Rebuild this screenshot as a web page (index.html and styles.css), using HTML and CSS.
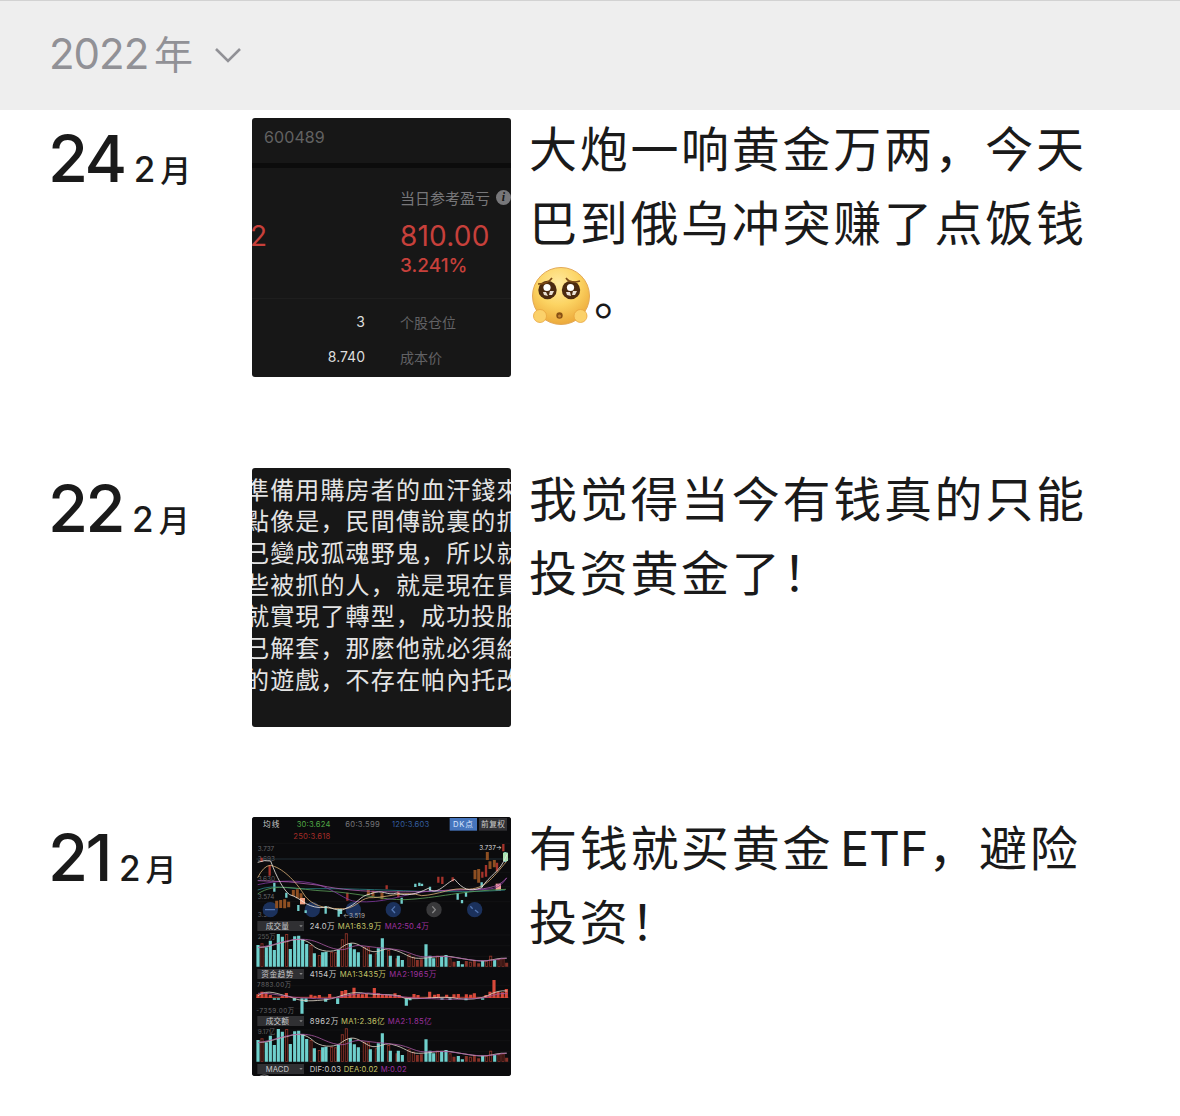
FILE: index.html
```
<!DOCTYPE html>
<html lang="zh-CN">
<head>
  <meta charset="UTF-8" />
  <meta name="viewport" content="width=device-width, initial-scale=1.0"/>
  <title>朋友圈</title>
  <link rel="stylesheet" href="styles.css">
</head>
<body>
  <div class="year-bar">
    <span class="year"><span class="num">2022</span>年</span>
    <svg class="chevron" viewBox="0 0 28 18"><path d="M2 3L14 15L26 3"/></svg>
  </div>

  <div class="post">
    <div class="date"><span class="day">24</span><span class="month">2</span><span class="yue">月</span></div>
    <div class="thumb stock">
      <div class="stock-code">600489</div>
      <div class="stock-main">
        <span class="cut">2</span>
        <div class="profit">
          <div class="label">当日参考盈亏 <span class="info">i</span></div>
          <div class="amount">810.00</div>
          <div class="percent">3.241%</div>
        </div>
      </div>
      <div class="stock-rows">
        <span class="val">3</span><span class="key">个股仓位</span>
        <span class="val">8.740</span><span class="key">成本价</span>
      </div>
    </div>
    <div class="text">大炮一响黄金万两，今天<br>巴到俄乌冲突赚了点饭钱<br><svg class="emoji" viewBox="0 0 60 60">
        <defs>
          <radialGradient id="face" cx="45%" cy="28%" r="75%">
            <stop offset="0" stop-color="#ffeaa0"/>
            <stop offset="0.5" stop-color="#fcd463"/>
            <stop offset="1" stop-color="#eba637"/>
          </radialGradient>
        </defs>
        <circle cx="30" cy="30" r="28.5" fill="url(#face)" stroke="#e3a958" stroke-width="1"/>
        <circle cx="16.500" cy="24" r="9.200" fill="#4b2a10"/>
        <circle cx="40" cy="24" r="9.200" fill="#4b2a10"/>
        <path d="M7 18Q17 18 21 12M35 12Q39 18 49 15" fill="none" stroke="#7c4a17" stroke-width="1.600"/>
        <circle cx="16" cy="21.500" r="3.600" fill="#fff"/>
        <circle cx="39.500" cy="21.500" r="3.600" fill="#fff"/>
        <path d="M12 26l3 0 2 4-4-1zM19 25h4l-2 4h-3zM35 26h4l1 4-4-1zM42 25h4l-2 4h-3z" fill="#e9dfd4"/>
        <circle cx="28.500" cy="49.500" r="3.200" fill="#875014"/>
        <circle cx="28.500" cy="50" r="1.500" fill="#c58431"/>
        <circle cx="9" cy="50" r="6.500" fill="#fbd16a" stroke="#e9a43e" stroke-width="0.800"/>
        <circle cx="49.500" cy="50" r="6.500" fill="#fbd16a" stroke="#e9a43e" stroke-width="0.800"/>
      </svg>。</div>
  </div>

  <div class="post">
    <div class="date"><span class="day">22</span><span class="month">2</span><span class="yue">月</span></div>
    <div class="thumb note">
      <p>準備用購房者的血汗錢來</p>
      <p>點像是，民間傳說裏的抓</p>
      <p>己變成孤魂野鬼，所以就</p>
      <p>些被抓的人，就是現在買</p>
      <p>就實現了轉型，成功投胎</p>
      <p>己解套，那麼他就必須給</p>
      <p>的遊戲，不存在帕內托改</p>
    </div>
    <div class="text">我觉得当今有钱真的只能<br>投资黄金了！</div>
  </div>

  <div class="post">
    <div class="date"><span class="day">21</span><span class="month">2</span><span class="yue">月</span></div>
    <div class="thumb">
      <svg class="chart" viewBox="0 0 777 777">
        <defs>
          <g id="volume">
            <path class="grid" d="M34 60H795M34 92H795M34 124H795M34 156H795"/>
            <path class="red-bar" d="M51 155V85M125 155V57M198 155V90M223 155V120M260 155V110M272 155V112M292 155V73M304 155V55M358 155V95M370 155V97M394 155V115M431 155V105M456 155V130M492 155V118M505 155V125M517 155V135M529 155V133M578 155V122M615 155V130M627 155V140M664 155V138M676 155V140M688 155V135M701 155V145M725 155V137M737 155V122M762 155V133M774 155V130M785 155V143"/>
            <path class="hollow" d="M51 153V88M125 153V60M198 153V93M223 153V123M260 153V113M272 153V115M292 153V76M304 153V58M358 153V98M370 153V100M394 153V118M431 153V108M492 153V121M505 153V128M578 153V125M615 153V133M676 153V143M725 153V140M737 153V125M762 153V136M774 153V133"/>
            <path class="cyan-bar" d="M39 155V90M64 155V97M76 155V77M88 155V105M100 155V57M112 155V65M136 155V102M149 155V64M161 155V62M173 155V72M185 155V87M208 155V115M233 155V112M243 155V110M280 155V103M316 155V85M328 155V103M340 155V112M376 155V118M400 155V100M412 155V70M436 155V122M460 155V122M472 155V135M543 155V88M555 155V122M566 155V130M590 155V125M603 155V120M640 155V138M652 155V148M713 155V137M749 155V135"/>
            <path class="line ma-w" d="M39 97C75 98 90 85 125 80C170 65 190 78 210 97C240 115 275 110 290 97C320 75 335 85 360 100C395 125 415 95 440 103C480 112 490 130 520 130C560 130 590 118 630 127C670 134 700 140 725 137C750 134 762 128 785 130"/>
            <path class="line ma-p" d="M39 98C90 90 100 82 145 74C220 66 230 98 285 104C310 106 320 88 350 92C395 98 425 100 450 103C500 109 510 130 555 125C610 120 660 134 700 137C735 139 760 132 785 129"/>
          </g>
        </defs>

        <!-- price -->
        <g transform="translate(-21 -21)">
          <path class="grid" d="M34 100H795M34 147H795M34 187H795M34 230H795M34 275H795"/>
          <rect x="614" y="24" width="82" height="38" fill="#4675bd"/>
          <rect x="702" y="24" width="84" height="38" fill="#303033"/>
          <text class="t" x="54" y="52" textLength="49" fill="#ccc">均线</text>
          <text class="t" x="155" y="52" textLength="101" fill="#51a746">30:3.624</text>
          <text class="t" x="301" y="52" textLength="103" fill="#77777a">60:3.599</text>
          <text class="t" x="441" y="52" textLength="112" fill="#345d9f">120:3.603</text>
          <text class="t" x="145" y="88" textLength="111" fill="#a52c28">250:3.618</text>
          <text class="t" x="624" y="52" textLength="60" fill="#d9e7ff">DK点</text>
          <text class="t" x="708" y="52" textLength="72" fill="#ccc">前复权</text>
          <g class="s" fill="#66666a">
            <text x="38" y="123">3.737</text>
            <text x="38" y="154">3.693</text>
            <text x="38" y="212">3.630</text>
            <text x="38" y="268">3.574</text>
            <text x="38" y="320">3.519</text>
          </g>
          <path d="M34 147H795" stroke="#243b46" stroke-width="2"/>
          <g fill="#1b315c">
            <circle cx="76" cy="299" r="23"/><circle cx="202" cy="299" r="23"/><circle cx="325" cy="299" r="23"/>
            <circle cx="445" cy="299" r="23"/><circle cx="689" cy="299" r="23"/>
            <circle cx="567" cy="299" r="23" fill="#39393b"/>
          </g>
          <text class="s" x="294" y="323" fill="#aaa">←3.519</text>
          <text class="s" x="703" y="120" fill="#ddd">3.737→</text>
          <path d="M450 289l-9 10 9 10M60 299h30M676 289l7 7M690 300l10 8" fill="none" stroke="#5275b2" stroke-width="4"/>
          <path d="M562 289l9 10-9 10" fill="none" stroke="#888" stroke-width="4"/>
          <path class="candle-o" d="M95 272V295M107 270V294M119 268V295M131 275V292M145 240V258M157 238V265M168 250V268M370 238V256M384 242V260M411 248V268M690 180V208M701 177V218M727 126V150M735 154V177M748 150V172"/>
          <path class="candle-r" d="M74 165V197M74 178V186M307 248V272M425 226V238M460 244V262M580 200V218M592 200V222M623 202V214M712 185V203M723 165V200M756 158V184M775 102V124M50 143V156"/>
          <path class="candle-c" d="M88 218V245M124 248V263M160 285V303M182 301V309M242 288V311M281 297V320M288 297V312M470 263V281M511 221V231M523 218V228M531 221V228M555 230V243M638 249V269M651 270V280M663 246V260M710 217V232M781 126V156"/>
          <rect x="165" y="264" width="15" height="19" fill="#f1a184"/>
          <rect x="752" y="221" width="16" height="21" fill="#f3a09a"/>
          <rect x="774" y="128" width="15" height="25" fill="#a9e1b0"/>
          <path class="line" stroke="#287f83" d="M38 240C90 220 130 240 210 236C330 235 450 242 560 245C650 245 720 245 780 240"/>
          <path class="line" stroke="#5a9a57" d="M38 252C90 215 160 240 240 243C350 250 410 270 480 269C580 264 650 242 783 238"/>
          <path class="line" stroke="#7d379b" d="M38 224C100 210 170 210 215 223C270 238 300 272 335 275C420 280 460 256 540 245C640 236 720 244 752 233Q770 228 785 203"/>
          <path class="line" stroke="#a85baa" d="M38 212Q130 212 225 226C340 252 520 247 620 240C690 236 750 245 785 204"/>
          <path class="line" stroke="#d5ab74" d="M38 203Q56 167 76 166C110 172 150 210 180 258C210 296 260 296 299 296C340 292 347 259 385 263C440 260 480 242 530 257C580 255 625 230 663 238C720 237 738 209 785 154"/>
          <path class="line" stroke="#e9e5df" d="M38 157Q60 149 77 153C94 201 117 242 134 254C171 265 178 289 225 293L250 291Q286 306 299 297C338 282 343 258 375 252C416 235 423 259 456 249C486 259 511 254 550 235C576 260 600 219 629 208C654 238 672 247 710 233C735 193 764 190 786 133"/>
        </g>

        <!-- volume -->
        <g transform="translate(-21 294)">
          <text class="s" x="38" y="71" fill="#666">255万</text>
          <use href="#volume"/>
          <rect class="tab" x="37" y="18" width="140" height="30"/>
          <text class="t" x="62" y="42" textLength="70" fill="#c9c9cb">成交量</text>
          <path class="arrow" d="M163 31h10l-5 6z"/>
          <text class="t" x="194" y="42" textLength="75" fill="#ccc">24.0万</text>
          <text class="t" x="278" y="42" textLength="131" fill="#c4c369">MA1:63.9万</text>
          <text class="t" x="419" y="42" textLength="133" fill="#9e319f">MA2:50.4万</text>
        </g>

        <!-- money flow -->
        <g transform="translate(-21 294)">
          <path class="grid" d="M34 212H795M34 248H795M34 280H795"/>
          <rect class="tab" x="37" y="162" width="140" height="30"/>
          <text class="t" x="49" y="186" textLength="96" fill="#c9c9cb">资金趋势</text>
          <path class="arrow" d="M163 174h10l-5 6z"/>
          <text class="t" x="194" y="186" textLength="80" fill="#ccc">4154万</text>
          <text class="t" x="284" y="186" textLength="139" fill="#c4c369">MA1:3435万</text>
          <text class="t" x="433" y="186" textLength="141" fill="#9e319f">MA2:1965万</text>
          <text class="s" x="36" y="215" textLength="102" fill="#67676a">7883.00万</text>
          <text class="s" x="34" y="293" textLength="113" fill="#67676a">-7359.00万</text>
          <path d="M34 247H790" stroke="#8e3029" stroke-width="4"/>
          <path class="flow" d="M39 249V238M51 249V230M63 249V233M76 249V240M112 249V242M124 249V234M198 249V239M210 249V242M223 249V240M254 249V237M291 249V228M302 249V225M315 249V237M327 249V218M340 249V237M352 249V238M364 249V237M388 249V219M400 249V235M412 249V238M424 249V239M436 249V240M450 249V235M463 249V240M507 249V237M519 249V240M554 249V230M569 249V239M580 249V237M605 249V239M627 249V238M640 249V237M664 249V238M677 249V239M688 249V235M723 249V240M735 249V230M747 249V195M759 249V230M772 249V232M784 249V222"/>
          <path class="cyan-bar" d="M88 250V254M100 250V254M148 250V257M171 250V296M183 250V261M242 250V260M278 250V267M484 250V272M495 250V256M591 250V254M615 250V255M663 250V256M713 250V254"/>
          <path class="line ma-w" d="M39 242C70 220 95 238 135 245C170 263 210 257 245 254C285 248 315 224 365 236C415 242 445 233 480 250C530 255 590 240 640 251Q690 257 728 242Q760 224 787 228"/>
          <path class="line ma-p" d="M39 235C80 232 135 250 185 249C270 259 310 235 370 234C440 240 490 251 560 251C640 255 690 251 725 247Q761 233 787 236"/>
        </g>

        <!-- turnover, same shape as volume -->
        <g transform="translate(-21 579)">
          <text class="s" x="38" y="71" fill="#666">9.17亿</text>
          <use href="#volume"/>
          <rect class="tab" x="37" y="18" width="140" height="30"/>
          <text class="t" x="62" y="42" textLength="70" fill="#c9c9cb">成交额</text>
          <path class="arrow" d="M163 31h10l-5 6z"/>
          <text class="t" x="194" y="42" textLength="86" fill="#ccc">8962万</text>
          <text class="t" x="288" y="42" textLength="131" fill="#c4c369">MA1:2.36亿</text>
          <text class="t" x="428" y="42" textLength="132" fill="#9e319f">MA2:1.85亿</text>
          <rect class="tab" x="37" y="162" width="140" height="30"/>
          <text class="t" x="62" y="186" textLength="70" fill="#c9c9cb">MACD</text>
          <path class="arrow" d="M163 174h10l-5 6z"/>
          <text class="t" x="194" y="186" textLength="94" fill="#ccc">DIF:0.03</text>
          <text class="t" x="296" y="186" textLength="103" fill="#c4c369">DEA:0.02</text>
          <text class="t" x="407" y="186" textLength="78" fill="#9e319f">M:0.02</text>
          <path d="M42 200Q58 190 74 200" fill="none" stroke="#ccc" stroke-width="2"/>
        </g>
      </svg>
    </div>
    <div class="text">有钱就买黄金<span class="latin">ETF</span>，避险<br>投资！</div>
  </div>
</body>
</html>
```
FILE: styles.css
```
* {
  box-sizing: border-box;
}
body {
  margin: 0;
  background: #fff;
  color: #1a1a1a;
  font-family: Inter, "Noto Sans CJK SC", sans-serif;
}
.year-bar {
  display: flex;
  align-items: center;
  height: 110px;
  padding: 0 0 2px 49px;
  border-top: 1px solid #d2d2d2;
  background: #eee;
  color: #919196;
}
.year {
  display: flex;
  align-items: baseline;
  font-size: 39px;
  line-height: 50px;
}
.year .num {
  width: 105px;
  font-size: 42px;
  letter-spacing: -1px;
}
.chevron {
  width: 28px;
  height: 18px;
  margin-left: 21px;
}
.chevron path {
  fill: none;
  stroke: #919196;
  stroke-width: 2.6;
}
.post {
  display: grid;
  grid-template-columns: 204px 259px 1fr;
  height: 349.5px;
  padding: 8px 0 0 48px;
}
.date {
  display: flex;
  align-items: baseline;
  height: 80px;
  margin-top: 1px;
  line-height: 80px;
}
.day {
  font-size: 65px;
  font-weight: 500;
  letter-spacing: -2.5px;
}
.month {
  margin-left: 9px;
  font-size: 35px;
  font-weight: 500;
}
.yue {
  margin-left: 5px;
  font-size: 31px;
  font-weight: 500;
}
.thumb {
  width: 259px;
  height: 259px;
  border-radius: 3px;
  background: #171717;
  overflow: hidden;
}
.text {
  margin-top: -9px;
  padding-left: 18px;
  font-family: "Noto Sans CJK SC", sans-serif;
  font-size: 48px;
  line-height: 74px;
  letter-spacing: 2.7px;
  white-space: nowrap;
}
.latin {
  margin: 0 0 0 7px;
  font-family: Inter, sans-serif;
  line-height: 0;
  letter-spacing: 0;
}
.emoji {
  width: 60px;
  height: 60px;
  margin: 0 3px 0 2px;
  vertical-align: -11px;
}

/* stock screenshot */
.stock-code {
  height: 50px;
  padding: 9px 0 0 12px;
  border-bottom: 5px solid #0c0c0c;
  color: #626262;
  font-size: 16px;
  line-height: 20px;
  letter-spacing: 0.1px;
}
.stock-main {
  display: flex;
  height: 131px;
  border-bottom: 1px solid #1e1e1e;
}
.cut {
  width: 148px;
  margin-left: -2px;
  padding-top: 51px;
  color: #c7403b;
  font-size: 28px;
  line-height: 34px;
}
.profit {
  padding: 19px 0 0 2px;
  color: #c7403b;
  white-space: nowrap;
}
.label {
  display: flex;
  align-items: center;
  gap: 6px;
  height: 20px;
  color: #77777a;
  font-size: 15px;
}
.info {
  width: 15px;
  height: 15px;
  border-radius: 50%;
  background: #77777a;
  color: #171717;
  font: italic bold 12px/15px "Liberation Serif", serif;
  text-align: center;
}
.amount {
  margin-top: 12px;
  font-size: 28px;
  line-height: 34px;
  letter-spacing: 0.2px;
}
.percent {
  margin-top: 1px;
  font-size: 19px;
  font-weight: 500;
  line-height: 24px;
}
.stock-rows {
  display: grid;
  grid-template-columns: 113px 1fr;
  grid-auto-rows: 35px;
  column-gap: 35px;
  align-items: center;
  padding-top: 5px;
  color: #626265;
  font-size: 14px;
}
.val {
  color: #ddd;
  text-align: right;
}

/* text screenshot */
.note {
  padding-top: 5px;
}
.note p {
  margin: 0 0 0 -7px;
  color: #e4e4e4;
  font-family: "Noto Sans CJK SC", sans-serif;
  font-size: 24px;
  line-height: 31.7px;
  letter-spacing: 1.15px;
  white-space: nowrap;
}

/* chart screenshot */
.chart {
  display: block;
  width: 259px;
  height: 259px;
  background: #0b0b0d;
}
.t {
  font-size: 23px;
}
.s {
  font-size: 19px;
}
.grid {
  stroke: #1b1b1d;
  stroke-width: 1.5;
}
.tab {
  fill: #303033;
}
.arrow {
  fill: #888;
}
.line {
  fill: none;
  stroke-width: 2.5;
}
.ma-w {
  stroke: #ddd4c5;
}
.ma-p {
  stroke: #a4559d;
}
.cyan-bar {
  stroke: #6fd0cc;
  stroke-width: 9.5;
}
.red-bar {
  stroke: #873228;
  stroke-width: 9;
}
.hollow {
  stroke: #1c0c0b;
  stroke-width: 4;
}
.flow {
  stroke: #d9493a;
  stroke-width: 9.5;
}
.candle-o {
  stroke: #8e4f22;
  stroke-width: 9;
}
.candle-r {
  stroke: #a5332b;
  stroke-width: 7;
}
.candle-c {
  stroke: #72cdca;
  stroke-width: 7;
}
```
